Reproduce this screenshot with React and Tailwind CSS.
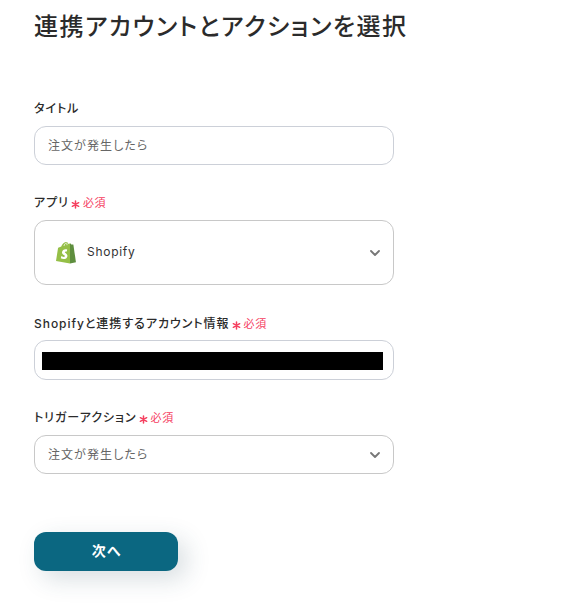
import { ChevronDown } from 'lucide-react';

function Required() {
  return (
    <span className="ml-[2px] inline-flex items-center text-[11px] font-normal tracking-[0.06em] text-[#f5405f]">
      <svg width="9" height="9" viewBox="0 0 10 10" className="mr-[3px] mt-[3px]" stroke="#f5405f" strokeWidth="1.7" strokeLinecap="round">
        <path d="M5 1v8M1.5 3l7 4M8.5 3l-7 4" />
      </svg>
      必須
    </span>
  );
}

function Label({ children, required }) {
  return (
    <div className="flex h-[18px] items-center text-[12px] font-medium leading-[18px] tracking-[0.08em] text-[#2b2b2b]">
      {children}
      {required && <Required />}
    </div>
  );
}

function ShopifyLogo() {
  return (
    <svg width="20" height="23" viewBox="0 0 20 23">
      <path d="M13.6 2.6 12.4 3 C12 1.8 11.3 1 10.2 1 C8 1 6 3.6 5.3 5.6 L2.8 6.4 C2.2 6.6 2.1 6.7 2 7.3 L0 20 L14 22.6 L14.6 2.8 Z" fill="#95bf47" />
      <path d="M14 22.6 L20 21.2 C20 21.2 17.4 4 17.4 3.8 C17.3 3.6 17.2 3.5 17 3.5 L15.3 3.4 L14.4 2.6 L14 2.6 Z" fill="#5e8e3e" />
      <path d="M8 5 C8.3 3.6 9 2.4 10 2 M11 4.2 C11 3.2 10.9 2.4 10.6 1.8" stroke="#fff" strokeWidth="0.7" fill="none" />
      <path d="M11.2 8.6 C9 7.8 6.2 8.8 6 11.2 C5.8 13.6 9 13.8 8.8 15.2 C8.7 16.2 7.2 16.2 5.4 15 L4.8 17.2 C7 18.6 11 18.4 11.4 15.2 C11.7 12.6 8.6 12.2 8.8 11.2 C8.9 10.4 10 10.2 10.8 10.6 Z" fill="#fff" />
    </svg>
  );
}

export default function App() {
  return (
    <div className="min-h-[607px] bg-white pl-[34px] font-['Inter','Noto_Sans_CJK_JP',sans-serif] [font-feature-settings:'palt']">
      <h1 className="pt-[9px] text-[24px] font-medium leading-[36px] tracking-[0.063em] text-[#2b2b2b]">連携アカウントとアクションを選択</h1>

      <div className="mt-[55px] w-[360px]">
        <Label>タイトル</Label>
        <div className="mt-[8px] flex h-[39px] items-center rounded-[12px] border border-[#ccd0d8] px-[13px] pt-[1px] text-[12px] tracking-[0.09em] text-[#666]">注文が発生したら</div>

        <div className="mt-[29px]">
          <Label required>アプリ</Label>
        </div>
        <div className="mt-[8px] flex h-[65px] items-center justify-between rounded-[12px] border border-[#c8c8c8] pl-[21px] pr-[10px]">
          <div className="flex items-center gap-[11px]">
            <ShopifyLogo />
            <span className="mb-[2px] text-[12px] tracking-[0.06em] text-[#333]">Shopify</span>
          </div>
          <ChevronDown size={16} strokeWidth={2.75} className="text-[#777]" />
        </div>

        <div className="mt-[30px]">
          <Label required>Shopifyと連携するアカウント情報</Label>
        </div>
        <div className="mt-[7px] flex h-[40px] items-center rounded-[12px] border border-[#ccd0d8] pl-[7px] pr-[10px]">
          <div className="mt-[2px] h-[18px] w-full bg-black" />
        </div>

        <div className="mt-[29px]">
          <Label required>トリガーアクション</Label>
        </div>
        <div className="mt-[8px] flex h-[39px] items-center justify-between rounded-[12px] border border-[#c8c8c8] pl-[13px] pr-[10px] text-[12px] tracking-[0.09em] text-[#666]">
          注文が発生したら
          <ChevronDown size={16} strokeWidth={2.75} className="text-[#777]" />
        </div>
      </div>

      <button className="mt-[58px] flex h-[39px] w-[144px] items-center justify-center rounded-[12px] bg-[#0b6781] pb-[2px] pl-[1px] text-[14px] font-bold tracking-[0.06em] text-white shadow-[8px_8px_24px_rgba(40,70,90,0.18)]">次へ</button>
    </div>
  );
}
